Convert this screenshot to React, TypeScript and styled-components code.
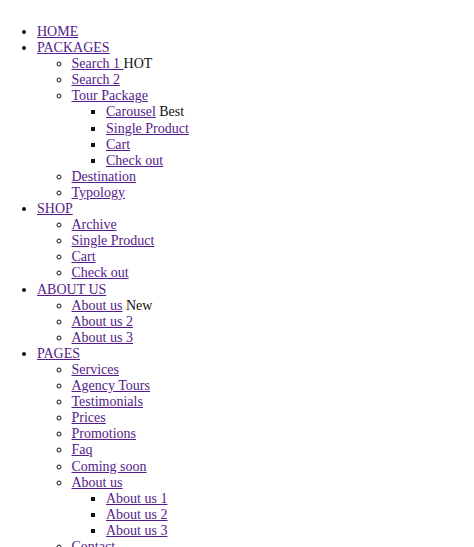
import React from 'react';
import styled, { createGlobalStyle } from 'styled-components';

const GlobalStyle = createGlobalStyle`
  body {
    margin: 8px;
    background: #fff;
    font-family: "Liberation Serif", "Times New Roman", serif;
    font-size: 14px;
    line-height: 16.1px;
    color: #111;
  }
`;

type TItem = { label: string; tag?: string; children?: TItem[] };

const menu: TItem[] = [
  { label: 'HOME' },
  {
    label: 'PACKAGES',
    children: [
      { label: 'Search 1 ', tag: 'HOT' },
      { label: 'Search 2' },
      {
        label: 'Tour Package',
        children: [
          { label: 'Carousel', tag: 'Best' },
          { label: 'Single Product' },
          { label: 'Cart' },
          { label: 'Check out' },
        ],
      },
      { label: 'Destination' },
      { label: 'Typology' },
    ],
  },
  {
    label: 'SHOP',
    children: [
      { label: 'Archive' },
      { label: 'Single Product' },
      { label: 'Cart' },
      { label: 'Check out' },
    ],
  },
  {
    label: 'ABOUT US',
    children: [
      { label: 'About us', tag: 'New' },
      { label: 'About us 2' },
      { label: 'About us 3' },
    ],
  },
  {
    label: 'PAGES',
    children: [
      { label: 'Services' },
      { label: 'Agency Tours' },
      { label: 'Testimonials' },
      { label: 'Prices' },
      { label: 'Promotions' },
      { label: 'Faq' },
      { label: 'Coming soon' },
      {
        label: 'About us',
        children: [
          { label: 'About us 1' },
          { label: 'About us 2' },
          { label: 'About us 3' },
        ],
      },
      { label: 'Contact' },
    ],
  },
];

const List = styled.ul<{ $level: number }>`
  margin: ${(p) => (p.$level === 0 ? '16px 0' : '0')};
  padding-left: ${(p) => (p.$level === 0 ? '29px' : '34.5px')};
  list-style-type: ${(p) => ['disc', 'circle', 'square'][p.$level] || 'square'};
`;

const Item = styled.li`
  line-height: 16.1px;
`;

const Link = styled.a`
  color: #551a8b;
  text-decoration: underline;
  cursor: pointer;
`;

const Tag = styled.span`
  color: #111;
`;

const Menu = ({ items, level }: { items: TItem[]; level: number }) => (
  <List $level={level}>
    {items.map((item, i) => (
      <Item key={i}>
        <Link href="#">{item.label}</Link>
        {item.tag && <Tag>{item.label.endsWith(' ') ? item.tag : ' ' + item.tag}</Tag>}
        {item.children && <Menu items={item.children} level={level + 1} />}
      </Item>
    ))}
  </List>
);

export default function App() {
  return (
    <>
      <GlobalStyle />
      <nav>
        <Menu items={menu} level={0} />
      </nav>
    </>
  );
}
